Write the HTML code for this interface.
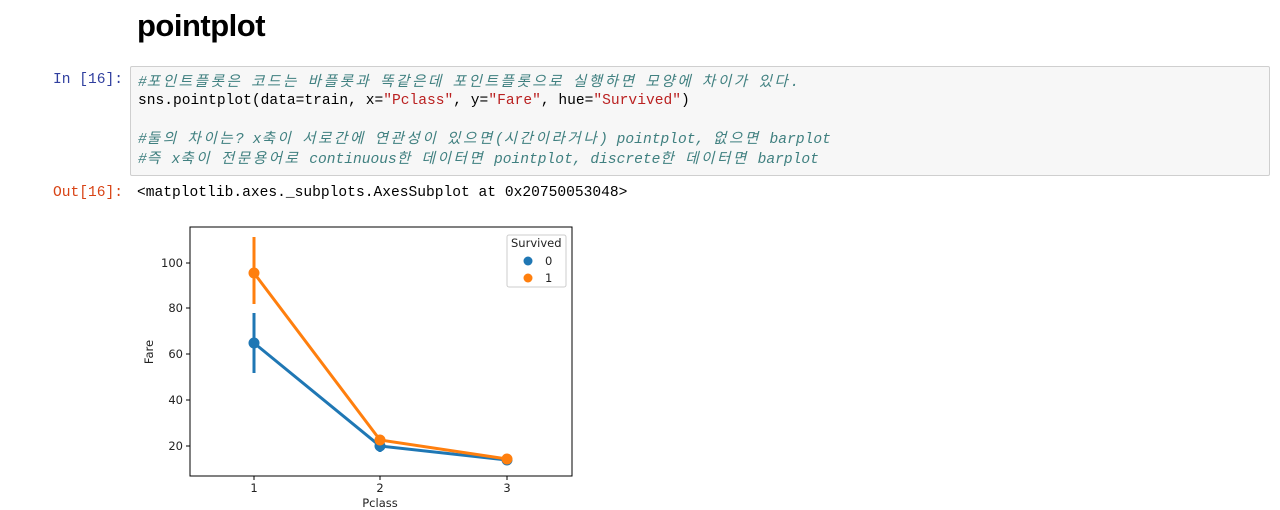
<!DOCTYPE html>
<html><head><meta charset="utf-8"><style>
body{margin:0;background:#fff;width:1280px;height:510px;overflow:hidden;position:relative;font-family:"Liberation Sans",sans-serif}
h1{position:absolute;left:137px;top:8px;margin:0;font-size:31px;font-weight:bold;color:#000;letter-spacing:-0.5px}
.mono{font-family:"Liberation Mono","Noto Sans CJK KR",monospace;font-size:14.6px;white-space:pre}
.p{position:absolute;top:72px;left:53px;color:#303f9f}
.o{position:absolute;top:185px;left:53px;color:#d84315}
.cell{position:absolute;left:130px;top:66px;width:1138px;height:108px;background:#f7f7f7;border:1px solid #cfcfcf;border-radius:2px}
.l{position:absolute;left:7px}
.c{color:#408080;font-style:italic;font-weight:normal}
.s{color:#ba2121}
.k{letter-spacing:2.5px}
</style></head><body>
<h1>pointplot</h1>
<div class="mono p">In [16]:</div>
<div class="cell mono">
<div class="l c" style="top:3px">#<span class="k">포인트플롯은</span> <span class="k">코드는</span> <span class="k">바플롯과</span> <span class="k">똑같은데</span> <span class="k">포인트플롯으로</span> <span class="k">실행하면</span> <span class="k">모양에</span> <span class="k">차이가</span> <span class="k">있다</span>.</div>
<div class="l" style="top:26px">sns.pointplot(data=train, x=<span class="s">"Pclass"</span>, y=<span class="s">"Fare"</span>, hue=<span class="s">"Survived"</span>)</div>
<div class="l c" style="top:60px">#<span class="k">둘의</span> <span class="k">차이는</span>? x<span class="k">축이</span> <span class="k">서로간에</span> <span class="k">연관성이</span> <span class="k">있으면</span>(<span class="k">시간이라거나</span>) pointplot, <span class="k">없으면</span> barplot</div>
<div class="l c" style="top:80px">#<span class="k">즉</span> x<span class="k">축이</span> <span class="k">전문용어로</span> continuous<span class="k">한</span> <span class="k">데이터면</span> pointplot, discrete<span class="k">한</span> <span class="k">데이터면</span> barplot</div>
</div>
<div class="mono o">Out[16]:</div>
<div class="mono" style="position:absolute;left:137px;top:185px;color:#000">&lt;matplotlib.axes._subplots.AxesSubplot at 0x20750053048&gt;</div>
<svg width="1280" height="510" style="position:absolute;left:0;top:0" font-family="DejaVu Sans, sans-serif" font-size="11.5">
<rect x="190" y="227" width="382" height="249" fill="none" stroke="#000" stroke-width="1"/>
<g stroke="#000"><line x1="186" y1="263" x2="190" y2="263"/><line x1="186" y1="308" x2="190" y2="308"/><line x1="186" y1="354" x2="190" y2="354"/><line x1="186" y1="400" x2="190" y2="400"/><line x1="186" y1="446" x2="190" y2="446"/>
<line x1="254" y1="476" x2="254" y2="480"/><line x1="380" y1="476" x2="380" y2="480"/><line x1="507" y1="476" x2="507" y2="480"/></g>
<g text-anchor="end" fill="#222"><text x="183" y="267">100</text><text x="183" y="312">80</text><text x="183" y="358">60</text><text x="183" y="404">40</text><text x="183" y="450">20</text></g>
<g text-anchor="middle" fill="#222"><text x="254" y="492">1</text><text x="380" y="492">2</text><text x="507" y="492">3</text><text x="380" y="507">Pclass</text>
<text x="153" y="352" transform="rotate(-90 153 352)">Fare</text></g>
<g stroke="#1f77b4" stroke-width="3" fill="#1f77b4">
<line x1="254" y1="313" x2="254" y2="373"/><line x1="380" y1="441" x2="380" y2="452"/>
<polyline points="254,343 380,446 507,460" fill="none"/>
<circle cx="254" cy="343" r="4"/><circle cx="380" cy="446" r="4"/><circle cx="507" cy="460" r="4"/></g>
<g stroke="#ff7f0e" stroke-width="3" fill="#ff7f0e">
<line x1="254" y1="237" x2="254" y2="304"/>
<polyline points="254,273 380,440 507,459" fill="none"/>
<circle cx="254" cy="273" r="4"/><circle cx="380" cy="440" r="4"/><circle cx="507" cy="459" r="4"/></g>
<rect x="507" y="235" width="59" height="52" fill="#fff" stroke="#ccc" rx="2"/>
<text x="511" y="247" fill="#222">Survived</text>
<circle cx="528" cy="261" r="4.5" fill="#1f77b4"/><text x="545" y="265" fill="#222">0</text>
<circle cx="528" cy="278" r="4.5" fill="#ff7f0e"/><text x="545" y="282" fill="#222">1</text>
</svg>
</body></html>
